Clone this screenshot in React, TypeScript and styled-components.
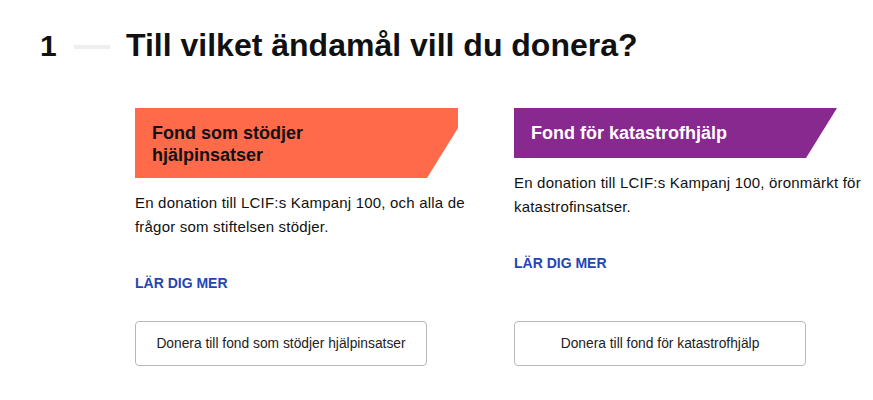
import styled, { createGlobalStyle } from "styled-components";

const GlobalStyle = createGlobalStyle`
  body {
    margin: 0;
    background: #fff;
    font-family: "Liberation Sans", Arial, sans-serif;
    color: #111;
  }
`;

type Fund = {
  id: string;
  title: string;
  color: string;
  textColor: string;
  text: string;
  button: string;
};

const funds: Fund[] = [
  {
    id: "help",
    title: "Fond som stödjer hjälpinsatser",
    color: "#ff6a4b",
    textColor: "#111",
    text: "En donation till LCIF:s Kampanj 100, och alla de frågor som stiftelsen stödjer.",
    button: "Donera till fond som stödjer hjälpinsatser",
  },
  {
    id: "disaster",
    title: "Fond för katastrofhjälp",
    color: "#88298f",
    textColor: "#fff",
    text: "En donation till LCIF:s Kampanj 100, öronmärkt för katastrofinsatser.",
    button: "Donera till fond för katastrofhjälp",
  },
];

export default function App() {
  return (
    <>
      <GlobalStyle />
      <Page>
        <Header>
          <Step>1</Step>
          <Dash />
          <Title>Till vilket ändamål vill du donera?</Title>
        </Header>
        <Cards>
          {funds.map((fund) => (
            <Card key={fund.id}>
              <Banner $bg={fund.color} $fg={fund.textColor}>
                <span>{fund.title}</span>
              </Banner>
              <Desc>{fund.text}</Desc>
              <LearnMore href="#">LÄR DIG MER</LearnMore>
              <DonateButton>{fund.button}</DonateButton>
            </Card>
          ))}
        </Cards>
      </Page>
    </>
  );
}

const Page = styled.div`
  padding: 27px 40px 0 40px;
`;

const Header = styled.div`
  display: flex;
  align-items: center;
`;

const Step = styled.span`
  font-size: 30px;
  font-weight: bold;
  width: 34px;
`;

const Dash = styled.span`
  display: block;
  width: 36px;
  height: 4px;
  background: #eeeeee;
  margin-right: 16px;
  margin-top: 2px;
`;

const Title = styled.h1`
  margin: 0;
  font-size: 32px;
  font-weight: bold;
`;

const Cards = styled.div`
  display: grid;
  grid-template-columns: 355px 355px;
  column-gap: 24px;
  margin: 44px 0 0 95px;
`;

const Card = styled.div`
  display: flex;
  flex-direction: column;
  align-items: flex-start;
`;

const Banner = styled.div<{ $bg: string; $fg: string }>`
  width: 323px;
  box-sizing: border-box;
  min-height: 50px;
  padding: 14px 17px 12px;
  background: ${(p) => p.$bg};
  color: ${(p) => p.$fg};
  font-size: 18px;
  font-weight: bold;
  line-height: 22px;
  clip-path: polygon(0 0, 100% 0, 100% calc(100% - 50px), calc(100% - 31px) 100%, 0 100%);
  span {
    display: block;
    max-width: 230px;
  }
`;

const Desc = styled.p`
  margin: 13px 0 0;
  font-size: 15px;
  line-height: 24px;
  color: #111;
  letter-spacing: 0.2px;
`;

const LearnMore = styled.a`
  margin: 36px 0 30px;
  font-size: 14px;
  font-weight: bold;
  color: #1f47b4;
  text-decoration: none;
`;

const DonateButton = styled.button`
  margin-top: auto;
  width: 292px;
  height: 45px;
  padding: 0;
  background: #fff;
  border: 1px solid #b8b8b8;
  border-radius: 4px;
  font-family: "Liberation Sans", Arial, sans-serif;
  font-size: 13.8px;
  color: #222;
  cursor: pointer;
`;
